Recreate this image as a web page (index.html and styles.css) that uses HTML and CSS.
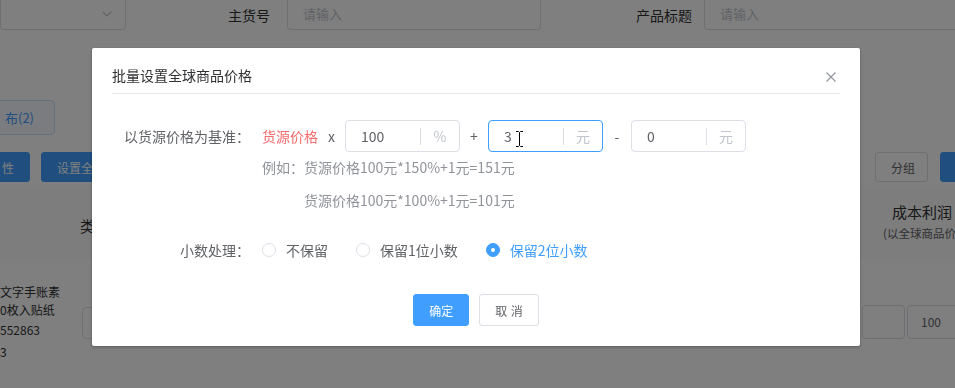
FILE: index.html
```html
<!DOCTYPE html>
<html>
<head>
  <meta charset="utf-8">
  <title>批量设置全球商品价格</title>
  <link rel="stylesheet" href="styles.css">
</head>
<body>
  <!-- page behind the dialog -->
  <div class="page">
    <div class="filters">
      <div class="select">
        <svg width="10" height="6" viewBox="0 0 10 6"><path d="M1 1l4 4 4-4" fill="none" stroke="#c0c4cc" stroke-width="1.2"/></svg>
      </div>
      <div class="f-label lab1">主货号</div>
      <div class="f-input in1">请输入</div>
      <div class="f-label lab2">产品标题</div>
      <div class="f-input in2">请输入</div>
    </div>

    <div class="tabs">
      <span class="tab">布(2)</span>
    </div>

    <div class="toolbar">
      <div class="tb-group">
        <button class="btn btn-blue b1">性</button>
        <button class="btn btn-blue b2">设置全球商品价格</button>
      </div>
      <div class="tb-group tb-right">
        <button class="btn b-group">分组</button>
        <button class="btn btn-blue b3"></button>
      </div>
    </div>

    <div class="thead">
      <div class="th-type">类型</div>
      <div class="th-cost">
        <div class="c1">成本利润</div>
        <div class="c2">(以全球商品价</div>
      </div>
    </div>

    <div class="trow">
      <div class="goods">
        <div class="t">文字手账素</div>
        <div class="t">0枚入贴纸</div>
        <div class="id">552863</div>
        <div class="id">3</div>
      </div>
      <div class="cell-input"></div>
      <div class="right-inputs">
        <div class="r-input"></div>
        <div class="r-input wide">100</div>
      </div>
    </div>
  </div>

  <div class="mask"></div>

  <div class="dialog-wrap">
    <div class="dialog">
      <div class="dlg-head">
        <span class="dlg-title">批量设置全球商品价格</span>
        <svg class="dlg-close" width="10" height="10" viewBox="0 0 10 10"><path d="M0.5 0.5l9 9M9.5 0.5l-9 9" stroke="#909399" stroke-width="1.1"/></svg>
      </div>

      <div class="dlg-body">
        <div class="form-row">
          <div class="form-label">以货源价格为基准：</div>
          <span class="src">货源价格</span>
          <span class="op first">x</span>
          <div class="num"><span class="val">100</span><span class="unit">%</span></div>
          <span class="op">+</span>
          <div class="num focus">
            <span class="val">3</span><span class="unit">元</span>
            <svg class="ibeam" width="9" height="18" viewBox="0 0 9 18"><path d="M1 1.5h2.5l1 1 1-1H8M4.5 2.5v13M1 16.5h2.5l1-1 1 1H8" fill="none" stroke="#fff" stroke-width="2.4"/><path d="M1 1.5h2.5l1 1 1-1H8M4.5 2.5v13M1 16.5h2.5l1-1 1 1H8" fill="none" stroke="#000" stroke-width="1"/></svg>
          </div>
          <span class="op">-</span>
          <div class="num"><span class="val">0</span><span class="unit">元</span></div>
        </div>

        <div class="example">
          <div>例如：货源价格100元*150%+1元=151元</div>
          <div class="l2">货源价格100元*100%+1元=101元</div>
        </div>

        <div class="form-row radios">
          <div class="form-label">小数处理：</div>
          <label class="radio"><i></i>不保留</label>
          <label class="radio"><i></i>保留1位小数</label>
          <label class="radio on"><i></i>保留2位小数</label>
        </div>
      </div>

      <div class="dlg-foot">
        <button class="dlg-btn primary">确定</button>
        <button class="dlg-btn cancel">取 消</button>
      </div>
    </div>
  </div>
</body>
</html>
```

FILE: styles.css
```css
* {
    box-sizing: border-box;
}

body {
    margin: 0;
    width: 955px;
    height: 388px;
    overflow: hidden;
    font-family: "Noto Sans CJK SC", "Noto Sans", sans-serif;
    color: #303133;
    background-color: #fff;
}

/* ---------- page behind ---------- */
.filters {
    display: flex;
    height: 30px;
}

.select {
    width: 126px;
    border: 1px solid #dcdfe6;
    border-top: 0;
    border-radius: 0 0 4px 4px;
    display: flex;
    justify-content: flex-end;
    align-items: center;
    padding-right: 13px;
    padding-bottom: 1px;
}

.f-label {
    font-size: 14px;
    line-height: 30px;
    text-align: right;
    color: #303133;
}

.lab1 {
    width: 161px;
    padding-right: 17px;
}

.lab2 {
    width: 163px;
    padding-right: 12px;
}

.f-input {
    border: 1px solid #dcdfe6;
    border-top: 0;
    border-radius: 0 0 4px 4px;
    font-size: 13px;
    line-height: 28px;
    color: #c0c4cc;
    padding-left: 15px;
}

.in1 {
    width: 254px;
}

.in2 {
    flex: 1;
    margin-right: -10px;
}

.tabs {
    margin-top: 70px;
    display: flex;
}

.tab {
    margin-left: -42px;
    width: 97px;
    height: 35px;
    border: 1px solid #c6e2ff;
    background-color: #f4f9ff;
    color: #409eff;
    border-radius: 4px;
    text-align: right;
    padding-right: 20px;
    font-size: 13px;
    line-height: 33px;
}

.toolbar {
    margin-top: 17px;
    height: 30px;
    display: flex;
    justify-content: space-between;
}

.tb-group {
    display: flex;
}

.tb-right {
    margin-right: -45px;
}

.btn {
    height: 30px;
    padding: 0 15px;
    font-family: inherit;
    font-size: 12px;
    border-radius: 3px;
    border: 1px solid #dcdfe6;
    background-color: #fff;
    color: #606266;
    white-space: nowrap;
}

.btn-blue {
    background-color: #409eff;
    border-color: #409eff;
    color: #fff;
}

.b1 {
    margin-left: -70px;
    width: 100px;
    text-align: right;
}

.b2 {
    margin-left: 11px;
}

.b-group {
    width: 53px;
}

.b3 {
    width: 60px;
    margin-left: 12px;
}

.thead {
    margin-top: 3px;
    height: 76px;
    display: flex;
    background-color: #fafafa;
    white-space: nowrap;
}

.th-type {
    margin-left: 80px;
    margin-top: 31px;
    font-size: 15px;
    line-height: 20px;
}

.th-cost {
    margin-left: auto;
    width: 72px;
    padding-top: 17px;
}

.th-cost .c1 {
    padding-left: 9px;
    font-size: 15px;
    line-height: 20px;
}

.th-cost .c2 {
    margin-top: 3px;
    font-size: 11.5px;
    line-height: 16px;
    color: #606266;
}

.trow {
    display: flex;
    align-items: flex-start;
    height: 127px;
}

.goods {
    width: 82px;
    padding-top: 22px;
    font-size: 12px;
    color: #303133;
    white-space: nowrap;
}

.goods .t {
    line-height: 18px;
}

.goods .id {
    line-height: 22px;
}

.cell-input {
    margin-top: 46px;
    width: 220px;
    height: 32px;
    border: 1px solid #dcdfe6;
    border-radius: 4px;
}

.right-inputs {
    margin-left: auto;
    margin-top: 44px;
    margin-right: -12px;
    display: flex;
    gap: 2px;
}

.r-input {
    width: 43px;
    height: 34px;
    border: 1px solid #dcdfe6;
    border-radius: 4px;
    font-size: 12px;
    line-height: 32px;
    padding-left: 13px;
    color: #606266;
}

.r-input.wide {
    width: 60px;
}

/* ---------- dialog ---------- */
.mask {
    position: fixed;
    inset: 0;
    background-color: rgba(0, 0, 0, 0.5);
}

.dialog-wrap {
    position: fixed;
    inset: 0;
    padding-top: 48px;
}

.dialog {
    margin-left: 92px;
    width: 768px;
    background-color: #fff;
    border-radius: 2px;
    box-shadow: 0 1px 3px rgba(0, 0, 0, 0.3);
}

.dlg-head {
    margin: 0 20px;
    padding: 15px 0 6px;
    border-bottom: 1px solid #e4e7ed;
    display: flex;
    justify-content: space-between;
    align-items: center;
}

.dlg-title {
    font-size: 14px;
    line-height: 24px;
    color: #303133;
}

.dlg-close {
    margin-right: 4px;
    margin-top: 4px;
}

.dlg-body {
    padding: 26px 20px 0;
}

.form-row {
    display: flex;
    align-items: center;
    height: 32px;
    font-size: 14px;
    color: #606266;
}

.form-label {
    width: 150px;
    padding-right: 12px;
    text-align: right;
    white-space: nowrap;
}

.src {
    width: 56px;
    color: #f56c6c;
    white-space: nowrap;
}

.op {
    width: 28px;
    text-align: center;
}

.op.first {
    width: 27px;
}

.num {
    position: relative;
    width: 115px;
    height: 32px;
    border: 1px solid #dcdfe6;
    border-radius: 4px;
    display: flex;
    align-items: center;
}

.num.focus {
    border-color: #409eff;
}

.num .val {
    flex: 1;
    padding-left: 15px;
    color: #606266;
}

.num .unit {
    width: 39px;
    text-align: center;
    border-left: 1px solid #dcdfe6;
    color: #c0c4cc;
    line-height: 17px;
}

.ibeam {
    position: absolute;
    left: 26px;
    top: 9px;
}

.example {
    margin-top: 5px;
    padding-left: 150px;
    font-size: 14px;
    line-height: 20px;
    color: #909399;
}

.example .l2 {
    margin-top: 13px;
    padding-left: 42px;
}

.radios {
    margin-top: 24px;
}

.radio {
    display: flex;
    align-items: center;
    margin-right: 28px;
    color: #606266;
    white-space: nowrap;
}

.radio i {
    width: 14px;
    height: 14px;
    border: 1px solid #dcdfe6;
    border-radius: 50%;
    margin-right: 10px;
}

.radio.on {
    color: #409eff;
}

.radio.on i {
    border-color: #409eff;
    background-color: #409eff;
    display: flex;
    align-items: center;
    justify-content: center;
}

.radio.on i::after {
    content: "";
    width: 4px;
    height: 4px;
    border-radius: 50%;
    background-color: #fff;
}

.dlg-foot {
    display: flex;
    justify-content: center;
    gap: 10px;
    padding: 28px 0 20px;
}

.dlg-btn {
    height: 32px;
    padding: 0 15px;
    font-family: inherit;
    font-size: 12px;
    border-radius: 3px;
    border: 1px solid #dcdfe6;
    background-color: #fff;
    color: #606266;
}

.dlg-btn.primary {
    background-color: #409eff;
    border-color: #409eff;
    color: #fff;
}

.dlg-btn.cancel {
    word-spacing: 1px;
}
```
